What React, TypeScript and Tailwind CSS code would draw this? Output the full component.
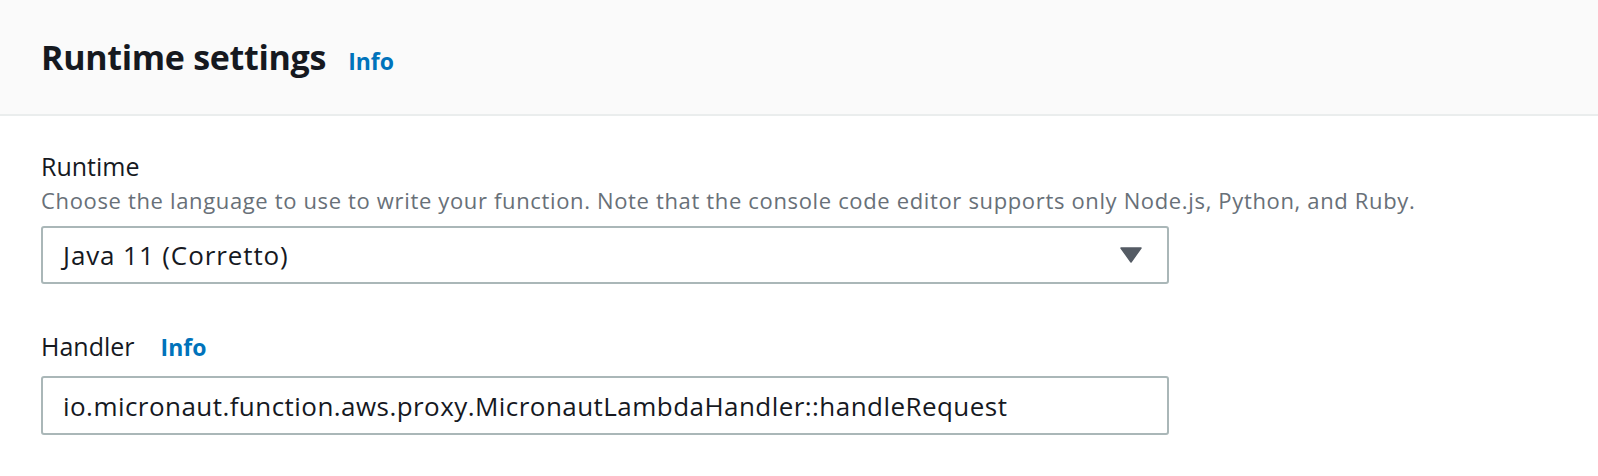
import React from "react";

const font = { fontFamily: "'Open Sans', 'Noto Sans', sans-serif" };

const InfoLink: React.FC<{ className?: string }> = ({ className }) => (
  <a href="#" className={"font-bold text-[#0073bb] " + (className ?? "")}>
    Info
  </a>
);

export default function App() {
  return (
    <div className="min-h-[476px] w-full bg-white text-[#16191f]" style={font}>
      <div className="flex h-[116px] items-baseline border-b-2 border-[#eaeded] bg-[#fafafa] pl-[41px] pt-[33px]">
        <h2 className="text-[34px] font-bold leading-[48px] tracking-[-0.3px]">Runtime settings</h2>
        <InfoLink className="ml-[22px] text-[23px]" />
      </div>

      <div className="flex flex-col pl-[41px] pt-[33px]">
        <label className="text-[25px] leading-[34px]">Runtime</label>
        <p className="mt-[2px] text-[22px] leading-[30px] tracking-[0.65px] text-[#687078]">
          Choose the language to use to write your function. Note that the console code editor supports only Node.js, Python, and Ruby.
        </p>
        <div className="mt-[11px] flex h-[58px] w-[1128px] items-center justify-between rounded-[3px] border-2 border-[#aab7b8] bg-white pl-[20px] pr-[25px]">
          <span className="text-[26px] leading-[34px] tracking-[0.9px]">Java 11 (Corretto)</span>
          <svg width="22" height="16" viewBox="0 0 22 16">
            <path d="M1 1 H21 L11 15 Z" fill="#545b64" stroke="#545b64" strokeWidth="1.5" strokeLinejoin="round" />
          </svg>
        </div>

        <div className="mt-[45px] flex h-[34px] items-baseline">
          <label className="text-[25px] leading-[34px]">Handler</label>
          <InfoLink className="ml-[26px] text-[23px] leading-[34px]" />
        </div>
        <div className="mt-[13px] flex h-[59px] w-[1128px] items-center rounded-[3px] border-2 border-[#aab7b8] bg-white pl-[20px]">
          <span className="text-[26px] leading-[34px] tracking-[0.45px]">io.micronaut.function.aws.proxy.MicronautLambdaHandler::handleRequest</span>
        </div>
      </div>
    </div>
  );
}
